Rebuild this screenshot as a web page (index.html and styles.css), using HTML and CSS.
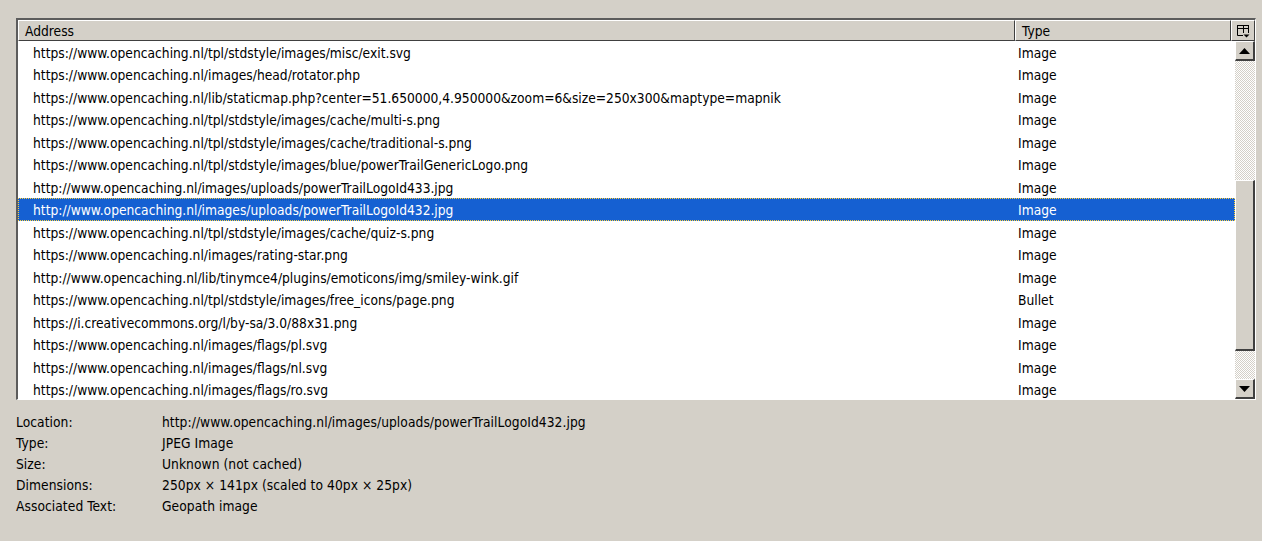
FILE: index.html
```html
<!DOCTYPE html>
<html lang="en">
<head>
<meta charset="utf-8">
<title>Page Info - Media</title>
<link rel="stylesheet" href="styles.css">
</head>
<body>
<main class="dialog">
  <section class="tree">
    <div class="head">
      <div class="col col-address">Address</div>
      <div class="col col-type">Type</div>
      <div class="col col-picker">
        <svg width="14" height="14" viewBox="0 0 14 14" class="picker-icon"><path d="M1.5 1.5H12.5M1.5 4.5H12.5M1.5 1V11.5H7M12.5 1V9M7.5 1V9" fill="none" stroke="#000" stroke-width="1"/><path d="M7.5 10.5H13.5L10.5 13.5Z" fill="#000"/></svg>
      </div>
    </div>
    <div class="body">
      <ul class="rows">
        <li class="row"><span class="addr">https://www.opencaching.nl/tpl/stdstyle/images/misc/exit.svg</span><span class="kind">Image</span></li>
        <li class="row"><span class="addr">https://www.opencaching.nl/images/head/rotator.php</span><span class="kind">Image</span></li>
        <li class="row"><span class="addr">https://www.opencaching.nl/lib/staticmap.php?center=51.650000,4.950000&amp;zoom=6&amp;size=250x300&amp;maptype=mapnik</span><span class="kind">Image</span></li>
        <li class="row"><span class="addr">https://www.opencaching.nl/tpl/stdstyle/images/cache/multi-s.png</span><span class="kind">Image</span></li>
        <li class="row"><span class="addr">https://www.opencaching.nl/tpl/stdstyle/images/cache/traditional-s.png</span><span class="kind">Image</span></li>
        <li class="row"><span class="addr">https://www.opencaching.nl/tpl/stdstyle/images/blue/powerTrailGenericLogo.png</span><span class="kind">Image</span></li>
        <li class="row"><span class="addr">http://www.opencaching.nl/images/uploads/powerTrailLogoId433.jpg</span><span class="kind">Image</span></li>
        <li class="row selected"><span class="addr">http://www.opencaching.nl/images/uploads/powerTrailLogoId432.jpg</span><span class="kind">Image</span></li>
        <li class="row"><span class="addr">https://www.opencaching.nl/tpl/stdstyle/images/cache/quiz-s.png</span><span class="kind">Image</span></li>
        <li class="row"><span class="addr">https://www.opencaching.nl/images/rating-star.png</span><span class="kind">Image</span></li>
        <li class="row"><span class="addr">http://www.opencaching.nl/lib/tinymce4/plugins/emoticons/img/smiley-wink.gif</span><span class="kind">Image</span></li>
        <li class="row"><span class="addr">https://www.opencaching.nl/tpl/stdstyle/images/free_icons/page.png</span><span class="kind">Bullet</span></li>
        <li class="row"><span class="addr">https://i.creativecommons.org/l/by-sa/3.0/88x31.png</span><span class="kind">Image</span></li>
        <li class="row"><span class="addr">https://www.opencaching.nl/images/flags/pl.svg</span><span class="kind">Image</span></li>
        <li class="row"><span class="addr">https://www.opencaching.nl/images/flags/nl.svg</span><span class="kind">Image</span></li>
        <li class="row"><span class="addr">https://www.opencaching.nl/images/flags/ro.svg</span><span class="kind">Image</span></li>
      </ul>
      <div class="scrollbar">
        <div class="btn"><svg width="11" height="6" viewBox="0 0 11 6"><path d="M5.5 0L11 6H0Z" fill="#000"/></svg></div>
        <div class="track track-top"></div>
        <div class="thumb"></div>
        <div class="track track-bottom"></div>
        <div class="btn"><svg width="11" height="6" viewBox="0 0 11 6"><path d="M0 0H11L5.5 6Z" fill="#000"/></svg></div>
      </div>
    </div>
  </section>
  <dl class="info">
    <dt>Location:</dt><dd>http://www.opencaching.nl/images/uploads/powerTrailLogoId432.jpg</dd>
    <dt>Type:</dt><dd>JPEG Image</dd>
    <dt>Size:</dt><dd>Unknown (not cached)</dd>
    <dt>Dimensions:</dt><dd>250px × 141px (scaled to 40px × 25px)</dd>
    <dt>Associated Text:</dt><dd>Geopath image</dd>
  </dl>
</main>
</body>
</html>
```
FILE: styles.css
```css
* { box-sizing: border-box; }
html, body { margin: 0; height: 100%; }
body {
  background: #d4d0c8;
  color: #000;
  font-family: "DejaVu Sans", Tahoma, sans-serif;
  font-stretch: condensed;
  font-size: 13.7px;
  overflow: hidden;
}
.dialog { padding: 18px 6px 0 16px; }
.tree {
  height: 382px;
  border-top: 2px solid #5c5c5c;
  border-left: 2px solid #5c5c5c;
  border-right: 1px solid #fff;
  border-bottom: 1px solid #fff;
  display: flex;
  flex-direction: column;
}
.head {
  display: flex;
  height: 21px;
  flex: none;
  position: relative;
  z-index: 1;
}
.col {
  background: #d4d0c8;
  border-top: 1px solid #fff;
  border-left: 1px solid #fff;
  border-right: 1px solid #404040;
  border-bottom: 1px solid #404040;
  line-height: 21px;
  white-space: nowrap;
}
.col-address { width: 997px; padding-left: 6px; }
.col-type { flex: 1; padding-left: 6px; }
.col-picker {
  width: 24px;
  display: flex;
  align-items: center;
  justify-content: center;
}
.body { flex: 1; display: flex; min-height: 0; }
.rows {
  list-style: none;
  margin: -0.5px 0 0;
  padding: 0;
  flex: 1;
  background: #fff;
  overflow: hidden;
}
.row {
  display: flex;
  height: 22.5px;
  line-height: 24px;
  white-space: nowrap;
}
.addr { width: 1000px; padding-left: 15px; flex: none; }
.kind { flex: 1; }
.selected {
  color: #fff;
  background:
    repeating-linear-gradient(90deg, #ffd23c 0 1px, #1560d2 1px 2px) top / 100% 1px no-repeat,
    repeating-linear-gradient(90deg, #ffd23c 0 1px, #1560d2 1px 2px) bottom / 100% 1px no-repeat,
    repeating-linear-gradient(0deg, #ffd23c 0 1px, #1560d2 1px 2px) left / 1px 100% no-repeat,
    repeating-linear-gradient(0deg, #ffd23c 0 1px, #1560d2 1px 2px) right / 1px 100% no-repeat,
    #1560d2;
}
.scrollbar {
  width: 20px;
  flex: none;
  display: flex;
  flex-direction: column;
}
.btn, .thumb {
  background: #d4d0c8;
  border-top: 1px solid #fff;
  border-left: 1px solid #fff;
  border-right: 2px solid #404040;
  border-bottom: 2px solid #404040;
}
.btn {
  height: 20px;
  flex: none;
  display: flex;
  align-items: center;
  justify-content: center;
}
.thumb { height: 171px; flex: none; }
.track {
  background: repeating-conic-gradient(#fff 0 25%, #d4d0c8 0 50%) 0 0 / 2px 2px;
}
.track-top { height: 119px; flex: none; }
.track-bottom { flex: 1; }
.info {
  margin: 12px 0 0;
  display: grid;
  grid-template-columns: 146px 1fr;
  grid-auto-rows: 21px;
  line-height: 21px;
  letter-spacing: 0.05px;
}
.info dt, .info dd { margin: 0; white-space: nowrap; }
```
